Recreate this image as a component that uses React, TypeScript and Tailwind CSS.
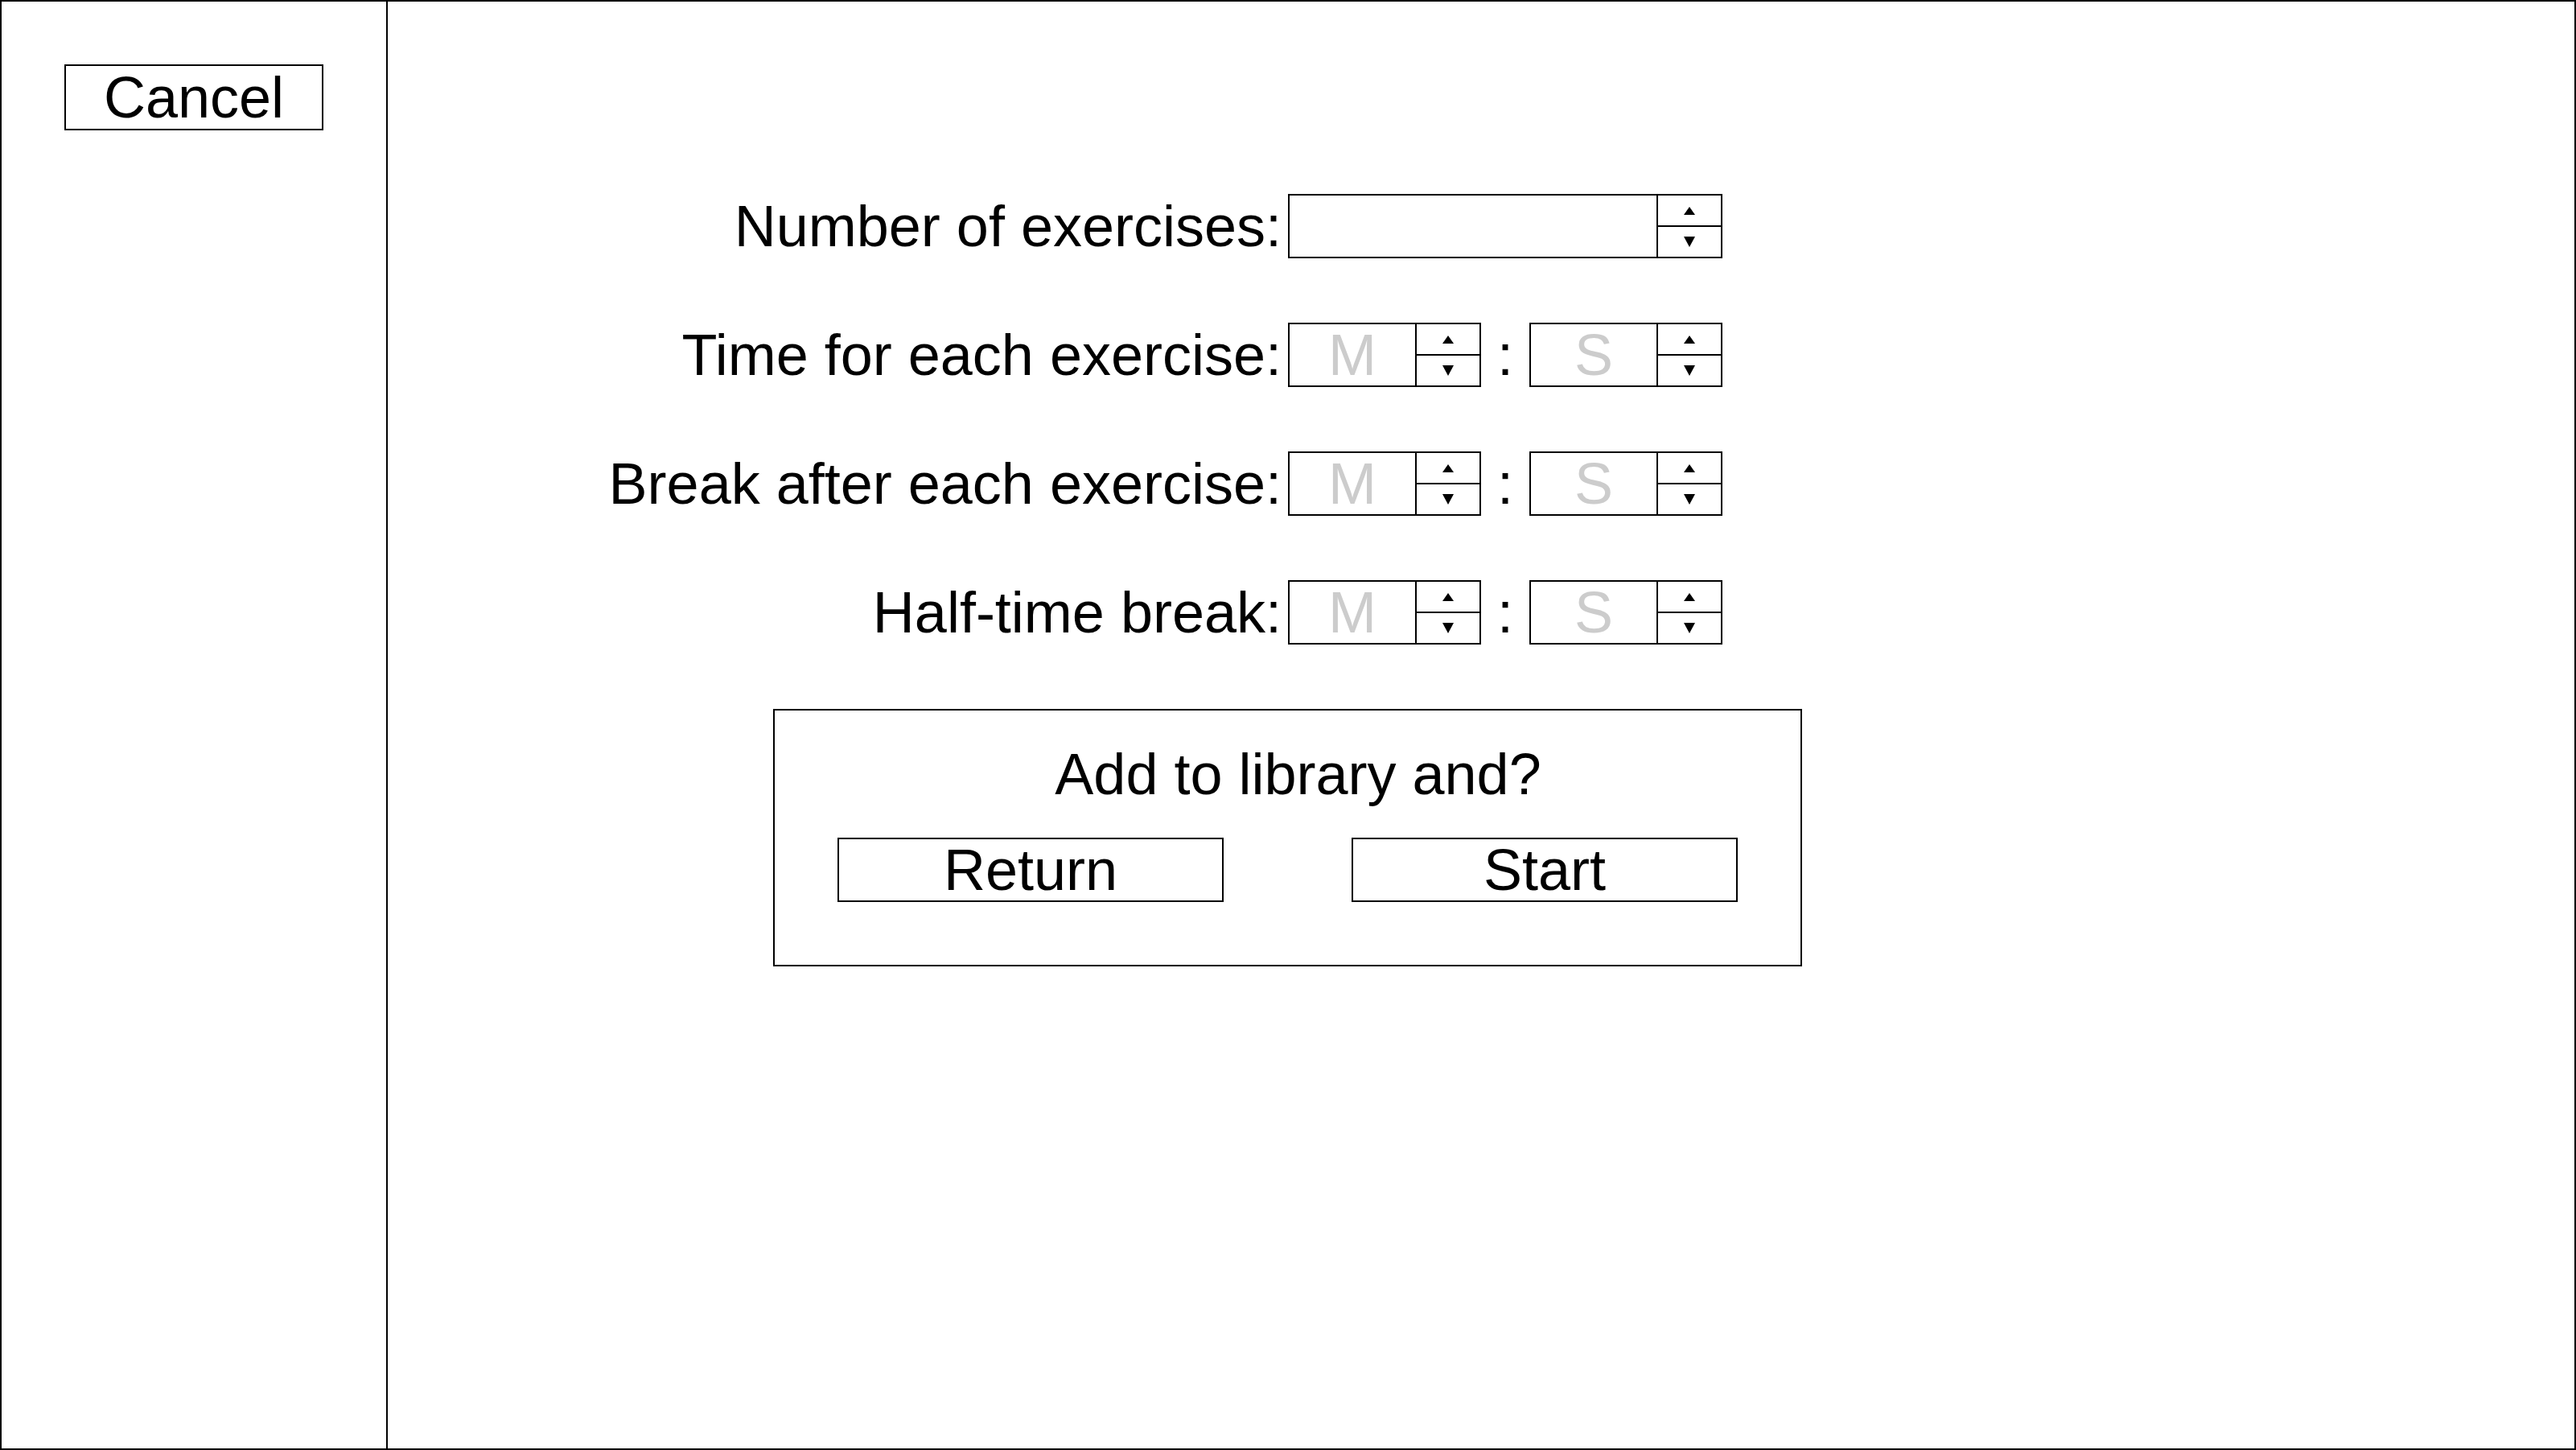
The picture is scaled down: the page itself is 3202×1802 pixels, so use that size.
import React from 'react'

const font = "font-['Liberation_Sans',Arial,sans-serif]"

function Arrows() {
  return (
    <div className="flex w-[80px] flex-col border-l-2 border-black">
      <div className="flex flex-1 items-center justify-center border-b-2 border-black">
        <svg width="14" height="10" viewBox="0 0 14 10">
          <polygon points="7,0 14,10 0,10" fill="black" />
        </svg>
      </div>
      <div className="flex flex-1 items-center justify-center">
        <svg width="14" height="13" viewBox="0 0 14 13">
          <polygon points="0,0 14,0 7,13" fill="black" />
        </svg>
      </div>
    </div>
  )
}

function Spinner({ placeholder, className }: { placeholder?: string; className: string }) {
  return (
    <div className={`flex h-[80px] border-2 border-black ${className}`}>
      <div className="flex flex-1 items-center justify-center leading-none text-[#cccccc]">
        {placeholder}
      </div>
      <Arrows />
    </div>
  )
}

function TimeInput() {
  return (
    <div className="flex items-center">
      <Spinner placeholder="M" className="w-[240px]" />
      <div className="flex w-[60px] justify-center leading-none">:</div>
      <Spinner placeholder="S" className="w-[240px]" />
    </div>
  )
}

export default function App() {
  const rows = [
    'Time for each exercise:',
    'Break after each exercise:',
    'Half-time break:',
  ]

  return (
    <div className={`flex h-screen w-screen border-2 border-black bg-white text-[72px] text-black ${font}`}>
      <aside className="w-[480px] shrink-0 border-r-2 border-black">
        <button className="ml-[78px] mt-[78px] flex h-[82px] w-[322px] items-center justify-center border-2 border-black leading-none">
          Cancel
        </button>
      </aside>

      <main className="flex-1 pt-[239px]">
        <div className="grid grid-cols-[1111px_540px] items-center gap-x-[8px] gap-y-[80px]">
          <div className="whitespace-nowrap text-right leading-none">Number of exercises:</div>
          <Spinner className="w-[540px]" />
          {rows.map((label) => (
            <React.Fragment key={label}>
              <div className="whitespace-nowrap text-right leading-none">{label}</div>
              <TimeInput />
            </React.Fragment>
          ))}
        </div>

        <div className="ml-[479px] mt-[80px] flex h-[320px] w-[1279px] flex-col border-2 border-black pt-[43px]">
          <div className="pl-[26px] text-center leading-none">Add to library and?</div>
          <div className="mt-[43px] flex justify-between px-[78px]">
            <button className="flex h-[80px] w-[480px] items-center justify-center border-2 border-black leading-none">
              Return
            </button>
            <button className="flex h-[80px] w-[480px] items-center justify-center border-2 border-black leading-none">
              Start
            </button>
          </div>
        </div>
      </main>
    </div>
  )
}
